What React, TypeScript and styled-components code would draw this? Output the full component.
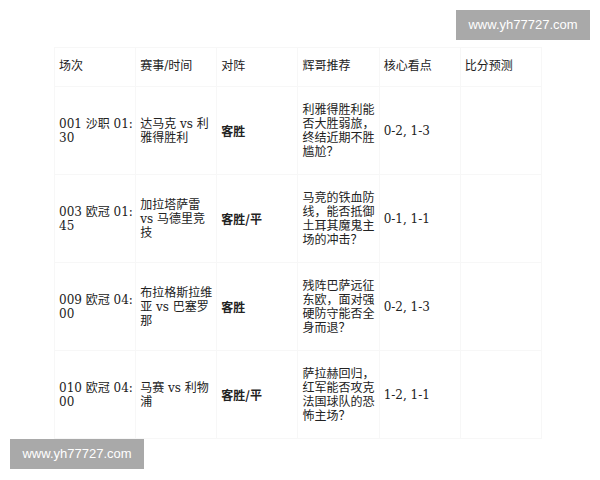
import styled, { createGlobalStyle } from "styled-components";

const GlobalStyle = createGlobalStyle`
  html, body {
    margin: 0;
    padding: 0;
    background: #ffffff;
  }
  body {
    width: 600px;
    height: 480px;
    overflow: hidden;
  }
`;

type Match = {
  id: string;
  match: string;
  pick: string;
  focus: string;
  score: string;
};

const matches: Match[] = [
  { id: "001 沙职 01:|30", match: "达马克 vs 利雅得胜利", pick: "客胜", focus: "利雅得胜利能否大胜弱旅，终结近期不胜尴尬？", score: "0-2, 1-3" },
  { id: "003 欧冠 01:|45", match: "加拉塔萨雷 vs 马德里竞技", pick: "客胜/平", focus: "马竞的铁血防线，能否抵御土耳其魔鬼主场的冲击？", score: "0-1, 1-1" },
  { id: "009 欧冠 04:|00", match: "布拉格斯拉维亚 vs 巴塞罗那", pick: "客胜", focus: "残阵巴萨远征东欧，面对强硬防守能否全身而退？", score: "0-2, 1-3" },
  { id: "010 欧冠 04:|00", match: "马赛 vs 利物浦", pick: "客胜/平", focus: "萨拉赫回归，红军能否攻克法国球队的恐怖主场？", score: "1-2, 1-1" },
];

const headers = ["场次", "赛事/时间", "对阵", "辉哥推荐", "核心看点", "比分预测"];

const Page = styled.div`
  position: relative;
  width: 600px;
  height: 480px;
  padding: 47px 0 0 54px;
  box-sizing: border-box;
  font-family: "DejaVu Serif", "Noto Sans CJK SC", serif;
  font-size: 12px;
  line-height: 14px;
  color: #222222;
`;

const Table = styled.table`
  width: 488px;
  table-layout: fixed;
  border-collapse: collapse;
`;

const HeadCell = styled.th`
  text-align: left;
  font-weight: normal;
  padding: 11px 1px 13px 4px;
  border: 1px solid #f7f7f7;
  vertical-align: middle;
`;

const Cell = styled.td<{ $bold?: boolean }>`
  padding: 16px 1px 15px 4px;
  border: 1px solid #f7f7f7;
  vertical-align: middle;
  font-weight: ${(p) => (p.$bold ? "bold" : "normal")};
  font-family: ${(p) => (p.$bold ? '"Noto Sans CJK SC", "DejaVu Sans", sans-serif' : "inherit")};
`;

const Watermark = styled.div<{ $corner: "top" | "bottom" }>`
  position: absolute;
  ${(p) => (p.$corner === "top" ? "top: 10px; right: 10px;" : "bottom: 11px; left: 10px;")}
  width: 134px;
  height: 30px;
  background: #a9a9a9;
  color: #ffffff;
  font-family: "Liberation Sans", Arial, sans-serif;
  font-size: 13px;
  display: flex;
  align-items: center;
  justify-content: center;
`;

function Id({ text }: { text: string }) {
  const [a, b] = text.split("|");
  return (
    <>
      {a}
      <wbr />
      {b}
    </>
  );
}

export default function App() {
  return (
    <>
      <GlobalStyle />
      <Page>
        <Table>
          <thead>
            <tr>
              {headers.map((h) => (
                <HeadCell key={h}>{h}</HeadCell>
              ))}
            </tr>
          </thead>
          <tbody>
            {matches.map((m) => (
              <tr key={m.id}>
                <Cell>
                  <Id text={m.id} />
                </Cell>
                <Cell>{m.match}</Cell>
                <Cell $bold>{m.pick}</Cell>
                <Cell>{m.focus}</Cell>
                <Cell>{m.score}</Cell>
                <Cell></Cell>
              </tr>
            ))}
          </tbody>
        </Table>
        <Watermark $corner="top">www.yh77727.com</Watermark>
        <Watermark $corner="bottom">www.yh77727.com</Watermark>
      </Page>
    </>
  );
}
